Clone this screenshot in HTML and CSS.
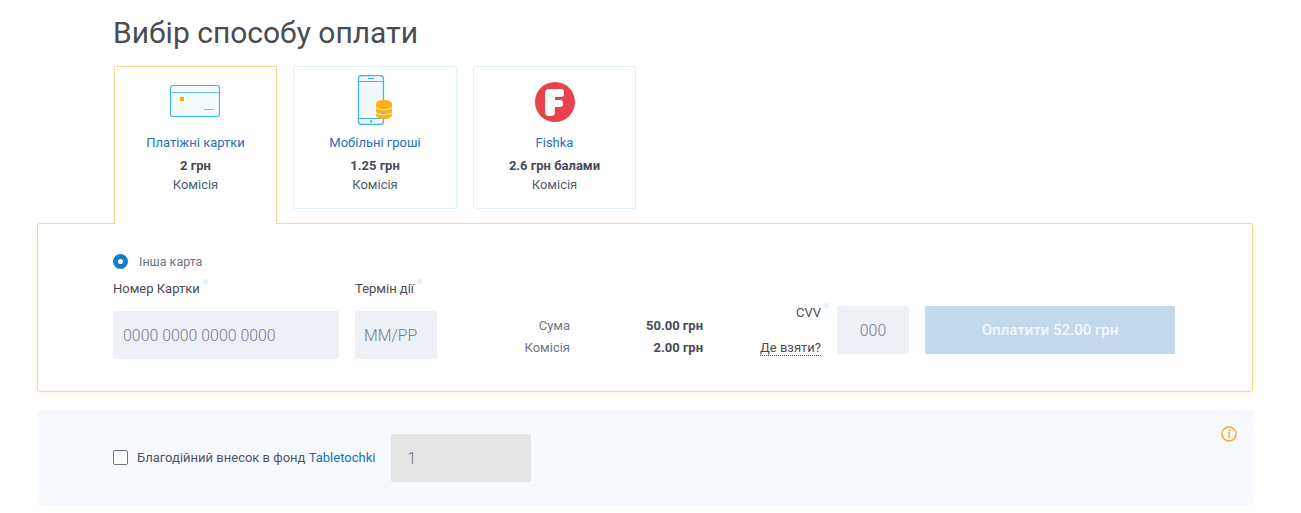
FILE: index.html
```html
<!DOCTYPE html>
<html lang="uk">
<head>
  <meta charset="UTF-8" />
  <title>Вибір способу оплати</title>
  <link rel="stylesheet" href="styles.css">
</head>
<body>
  <h1 class="page-title">Вибір способу оплати</h1>

  <div class="tabs">
    <div class="tab tab-active">
      <svg class="tab-icon" width="50" height="50" viewBox="0 0 50 50">
        <rect x="0.5" y="10.5" width="49" height="31" rx="2.5" fill="#f5fafe" stroke="#35b4ec" stroke-width="1.200"/>
        <path d="M1 17.500H49" stroke="#6cc4ee" fill="none"/>
        <rect x="10" y="22" width="4" height="4" fill="#ffa800"/>
        <path d="M34 34.500H44" stroke="#ffa800" fill="none"/>
      </svg>
      <div class="tab-name">Платіжні картки</div>
      <div class="tab-fee">2 грн</div>
      <div class="tab-note">Комісія</div>
    </div>
    <div class="tab">
      <svg class="tab-icon" width="50" height="50" viewBox="0 0 50 50">
        <rect x="8.500" y="0.500" width="25" height="49" rx="3" fill="#f3f8fd" stroke="#3fb6ee" stroke-width="1.300"/>
        <path d="M9 6.500H33M9 43.500H33" stroke="#3fb6ee" stroke-width="1.200" fill="none"/>
        <path d="M18 3.500H24" stroke="#3fb6ee" stroke-width="1.200" fill="none"/>
        <circle cx="21" cy="46.500" r="1.200" fill="#3fb6ee"/>
        <path d="M26 29c0-2.500 3.600-4 8-4s8 1.500 8 4v11c0 2.500-3.600 4-8 4s-8-1.500-8-4z" fill="#ffb01f"/>
        <path d="M26 32.500c1.500 1.700 4.500 2.200 8 2.200s6.500-.5 8-2.200M26 37.500c1.500 1.700 4.500 2.200 8 2.200s6.500-.5 8-2.200" stroke="#fff2d8" fill="none"/>
      </svg>
      <div class="tab-name">Мобільні гроші</div>
      <div class="tab-fee">1.25 грн</div>
      <div class="tab-note">Комісія</div>
    </div>
    <div class="tab">
      <svg class="tab-icon" width="50" height="50" viewBox="0 0 50 50">
        <circle cx="25" cy="27" r="20" fill="#e8424d"/>
        <path d="M19 14H31a3 3 0 0 1 3 3V19a3 3 0 0 1-3 3H25V25H30a3 3 0 0 1 3 3V29a3 3 0 0 1-3 3H25V37a4 4 0 0 1-4 4H19a4 4 0 0 1-4-4V18a4 4 0 0 1 4-4z" fill="#fff"/>
      </svg>
      <div class="tab-name">Fishka</div>
      <div class="tab-fee">2.6 грн балами</div>
      <div class="tab-note">Комісія</div>
    </div>
  </div>

  <div class="panel">
    <div class="radio-row">
      <span class="radio"></span>
      <span class="radio-label">Інша карта</span>
    </div>
    <div class="form-row">
      <div class="field field-number">
        <div class="field-label">Номер Картки<i class="dot"></i></div>
        <div class="input">0000 0000 0000 0000</div>
      </div>
      <div class="field field-date">
        <div class="field-label">Термін дії<i class="dot"></i></div>
        <div class="input">MM/PP</div>
      </div>
      <div class="summary">
        <div class="summary-name">Сума</div>
        <div class="summary-value">50.00 грн</div>
        <div class="summary-name">Комісія</div>
        <div class="summary-value">2.00 грн</div>
      </div>
      <div class="cvv">
        <div class="cvv-text">
          <div class="cvv-label">CVV<i class="dot"></i></div>
          <a class="cvv-help">Де взяти?</a>
        </div>
        <div class="input input-cvv">000</div>
        <button class="pay-btn">Оплатити 52.00 грн</button>
      </div>
    </div>
  </div>

  <div class="donate">
    <span class="checkbox"></span>
    <span class="donate-label">Благодійний внесок в фонд <a>Tabletochki</a></span>
    <div class="input input-donate">1</div>
    <svg class="info-icon" width="16" height="16" viewBox="0 0 16 16">
      <circle cx="8" cy="8" r="7" fill="none" stroke="#ffa91f" stroke-width="1.500"/>
      <circle cx="8.600" cy="4.600" r="1" fill="#ffa91f"/>
      <path d="M6.800 7.200h1.800l-.9 4h1.500" fill="none" stroke="#ffa91f" stroke-width="1.200"/>
    </svg>
  </div>
</body>
</html>
```

FILE: styles.css
```css
* {
  box-sizing: border-box;
}
body {
  margin: 0;
  padding: 0 48px 8px 37px;
  font-family: Roboto, 'Liberation Sans', sans-serif;
  font-size: 13px;
  color: #474b57;
  background: #fff;
  overflow: hidden;
}
.page-title {
  margin: 0 0 0 76px;
  padding-top: 15px;
  font-size: 30px;
  line-height: 36px;
  font-weight: 400;
  color: #4a4c52;
}
.tabs {
  display: flex;
  align-items: flex-start;
  gap: 16px;
  margin: 15px 0 0 77px;
  position: relative;
  z-index: 1;
}
.tab {
  width: 164px;
  height: 143px;
  padding-top: 8px;
  border: 1px solid #e1f1fb;
  border-radius: 2px;
  text-align: center;
}
.tab:last-child {
  width: 163px;
}
.tab-active {
  width: 163px;
  height: 158px;
  margin-bottom: -1px;
  background: #fff;
  border-color: #fdd58c;
  border-bottom-color: #fff;
}
.tab-icon {
  display: block;
  margin: 0 auto;
}
.tab-active .tab-icon {
  margin-left: 55px;
}
.tab-name {
  margin-top: 9px;
  line-height: 18px;
  color: #2a6ebb;
}
.tab-fee {
  margin-top: 5px;
  line-height: 18px;
  font-weight: 700;
}
.tab-note {
  margin-top: 1px;
  line-height: 18px;
  color: #4d5b70;
}
.panel {
  height: 169px;
  padding: 29px 0 0 75px;
  border: 1px solid #fdd58c;
  border-radius: 3px;
  box-shadow: 0 2px 6px rgba(253, 213, 140, .25);
}
.radio-row {
  display: flex;
  align-items: center;
  gap: 11px;
  height: 17px;
}
.radio {
  width: 15px;
  height: 15px;
  border-radius: 50%;
  border: 5px solid #157dc9;
  background: #fff;
}
.radio-label {
  font-size: 12.500px;
  color: #6d7684;
}
.form-row {
  display: flex;
  align-items: flex-start;
  margin-top: 9px;
}
.field {
  margin-right: 16px;
}
.field-number {
  width: 226px;
}
.field-date {
  width: 82px;
}
.field-label {
  height: 32px;
  line-height: 16px;
  color: #4a4c52;
  white-space: nowrap;
}
.dot {
  display: inline-block;
  width: 5px;
  height: 5px;
  margin-left: 3px;
  border-radius: 50%;
  background: #e9eef5;
  vertical-align: 9px;
}
.input {
  height: 48px;
  padding-left: 10px;
  border-radius: 2px;
  background: #edf0f5;
  font-size: 15.900px;
  font-weight: 300;
  line-height: 49px;
  color: #737d8b;
}
.field-date .input {
  padding-left: 9px;
}
.summary {
  display: grid;
  grid-template-columns: 60px 133px;
  grid-auto-rows: 22px;
  margin: 38px 0 0 57px;
  line-height: 17px;
  text-align: right;
}
.summary-name {
  color: #6d7684;
}
.summary-value {
  font-weight: 700;
}
.cvv {
  display: flex;
  align-items: flex-start;
  margin: 25px 0 0 0;
  width: 472px;
}
.cvv-text {
  width: 118px;
  margin-right: 16px;
  text-align: right;
}
.cvv-label {
  line-height: 14px;
  margin-right: -8px;
  margin-top: -1px;
  color: #4a4c52;
}
.cvv-help {
  display: inline-block;
  margin-top: 20px;
  line-height: 15px;
  color: #4a4c52;
  border-bottom: 1px dotted #4a4c52;
}
.input-cvv {
  flex: none;
  width: 72px;
  padding-left: 0;
  margin-top: 2px;
  text-align: center;
}
.pay-btn {
  flex: none;
  width: 250px;
  height: 48px;
  margin: 2px 0 0 16px;
  border: 0;
  border-radius: 2px;
  background: #c2d9ee;
  color: #f3f8fc;
  font-family: inherit;
  font-size: 15px;
  font-weight: 500;
}
.donate {
  position: relative;
  display: flex;
  align-items: center;
  margin-top: 18px;
  height: 95px;
  padding: 0 0 0 76px;
  background: #f6f9fe;
}
.checkbox {
  width: 15px;
  height: 15px;
  margin-right: 9px;
  border: 1px solid #6d7684;
  border-radius: 2px;
  background: #fff;
}
.donate-label {
  font-size: 13px;
  color: #4d5566;
}
.donate-label a {
  color: #1b6fb8;
}
.input-donate {
  width: 140px;
  margin-left: 16px;
  padding-left: 16px;
  background: #e5e5e5;
  color: #6d6f75;
}
.info-icon {
  position: absolute;
  top: 16px;
  right: 16px;
}
```
